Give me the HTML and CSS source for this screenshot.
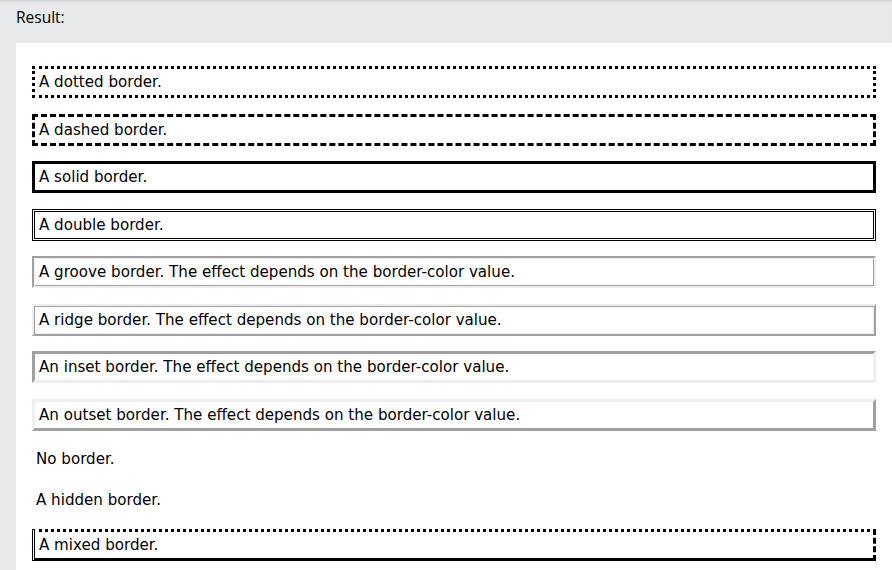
FILE: index.html
```html
<!DOCTYPE html>
<html>
<head>
<meta charset="utf-8">
<link rel="stylesheet" href="styles.css">
</head>
<body>
<div class="topbar">Result:</div>
<div class="panel">
  <p class="b dotted">A dotted border.</p>
  <p class="b dashed">A dashed border.</p>
  <p class="b solid">A solid border.</p>
  <p class="b double">A double border.</p>
  <p class="b groove">A groove border. The effect depends on the border-color value.</p>
  <p class="b ridge">A ridge border. The effect depends on the border-color value.</p>
  <p class="b inset">An inset border. The effect depends on the border-color value.</p>
  <p class="b outset">An outset border. The effect depends on the border-color value.</p>
  <p class="b none">No border.</p>
  <p class="b hidden">A hidden border.</p>
  <p class="b mix">A mixed border.</p>
</div>
</body>
</html>
```

FILE: styles.css
```css
html, body {
  margin: 0;
  padding: 0;
  background: #e7e9eb;
  overflow: hidden;
}
body {
  box-shadow: inset 0 3px 3px -2px rgba(0,0,0,0.15);
  height: 570px;
}
.topbar {
  font-family: "Open Sans", "Liberation Sans", sans-serif;
  font-size: 15.5px;
  color: #000;
  padding: 6px 0 0 16px;
  height: 43px;
  box-sizing: border-box;
}
.panel {
  margin-left: 16px;
  background: #fff;
  padding: 8px 16px 20px 16px;
  min-height: 600px;
  display: flow-root;
}
.b {
  font-family: "DejaVu Sans", Verdana, sans-serif;
  font-size: 15.1px;
  line-height: 18px;
  color: #000;
  margin: 15.45px 0;
  padding: 4px;
  border: 3px solid #000;
}
.dotted { border-style: dotted; }
.dashed { border-style: dashed; }
.solid { border-style: solid; }
.double { border-style: double; }
.groove {
  border-width: 2px;
  padding: 5px;
  border-color: #a0a0a0 #eee #eee #a0a0a0;
  box-shadow: inset 1px 1px 0 #eee, inset -1px -1px 0 #a0a0a0;
}
.ridge {
  border-width: 2px;
  padding: 5px;
  border-color: #eee #a0a0a0 #a0a0a0 #eee;
  box-shadow: inset 1px 1px 0 #a0a0a0, inset -1px -1px 0 #eee;
}
.inset { border-color: #a0a0a0 #eee #eee #a0a0a0; }
.outset { border-color: #eee #a0a0a0 #a0a0a0 #eee; }
.none { border-style: none; }
.hidden { border-style: hidden; }
.mix { border-style: dotted dashed solid double; }
```
